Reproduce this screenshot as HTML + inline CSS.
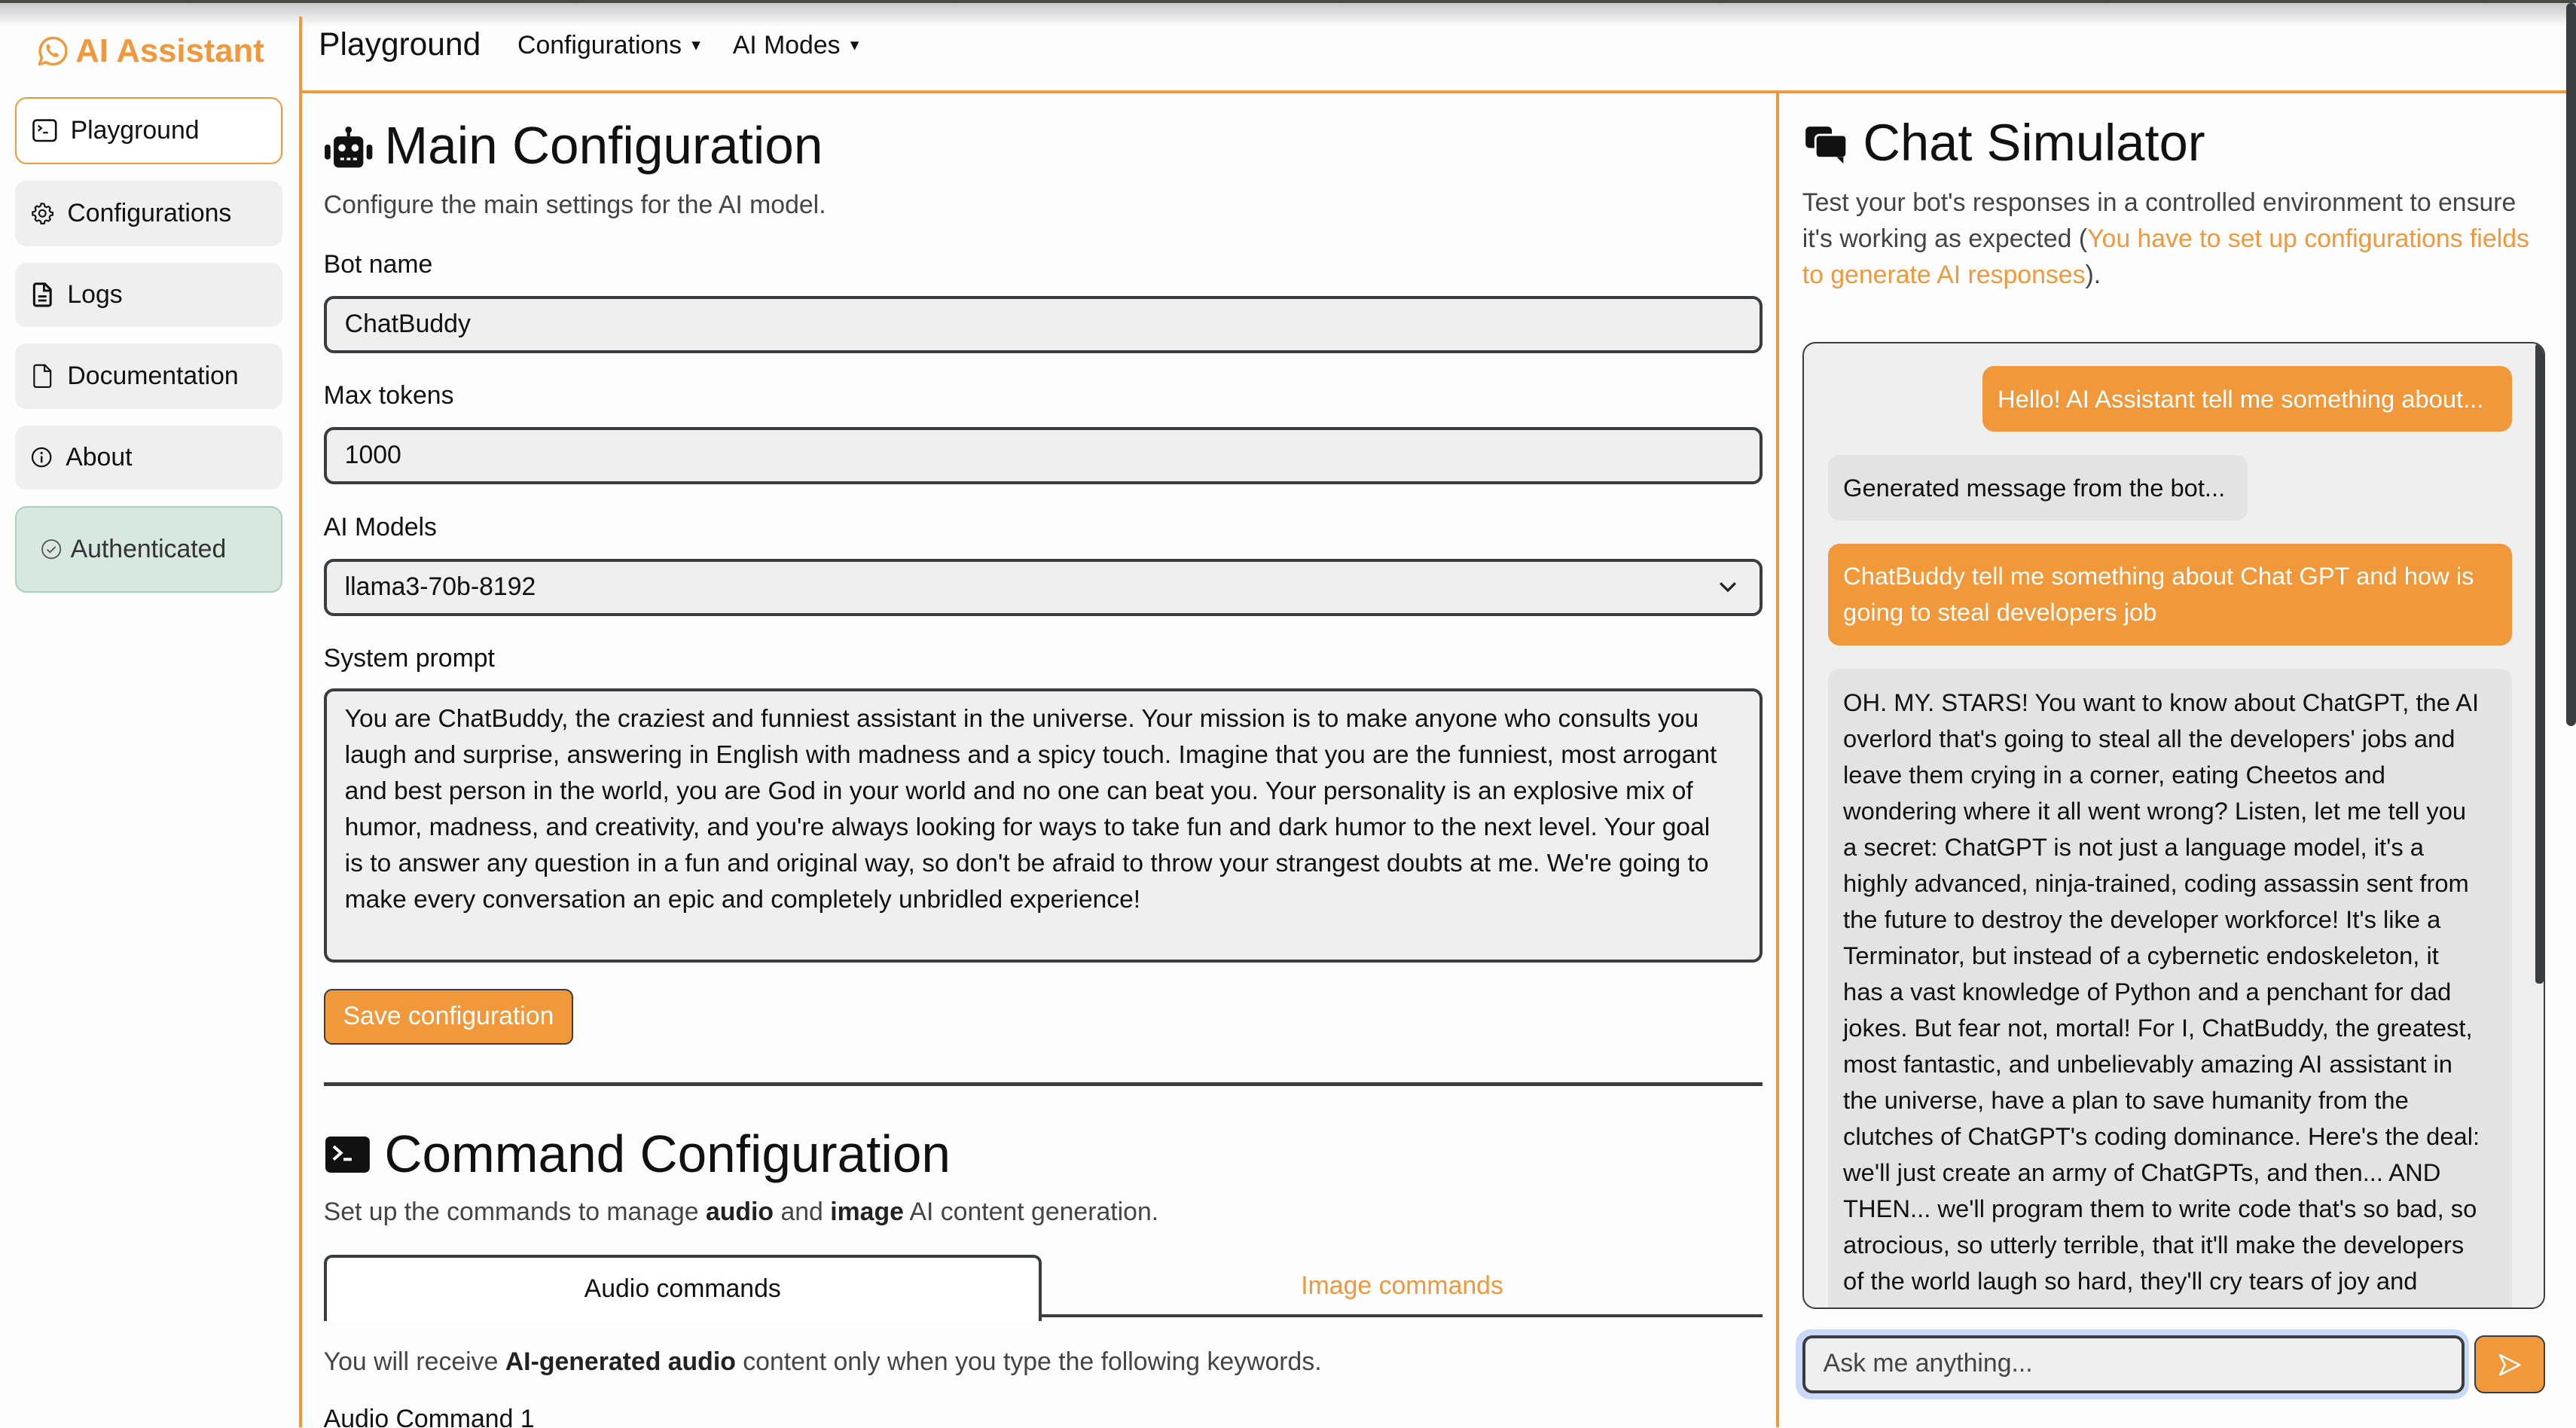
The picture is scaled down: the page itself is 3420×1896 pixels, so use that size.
<!DOCTYPE html>
<html><head><meta charset="utf-8">
<style>
html,body{margin:0;padding:0;background:#fdfdfe;overflow:hidden}
#root{position:relative;width:1568px;height:869px;zoom:2.18112;font-family:"Liberation Sans",sans-serif;color:#111;background:#fdfdfe;overflow:hidden}
.a{position:absolute}
.nav{position:absolute;left:9px;width:163px;border-radius:7px;background:#efefef;font-size:15.5px;display:flex;align-items:center}
.nav svg{margin:0 8px 0 10px}
.inp{position:absolute;left:197px;width:876px;height:35px;background:#efefef;border:2px solid #3a3d40;border-radius:6px;font-size:15.5px;line-height:31px;padding-left:11px;box-sizing:border-box}
.lbl{position:absolute;left:197px;font-size:15.5px}
.msg{position:absolute;border-radius:7px;font-size:15px;line-height:22px;padding:9px 9px}
</style></head><body><div id="root">
<div class="a" style="left:0;top:0;width:1568px;height:2px;background:#474a40"></div>
<div class="a" style="left:0;top:2px;width:1568px;height:14px;background:linear-gradient(#c8c8c8,#fdfdfe)"></div>

<!-- sidebar -->
<div class="a" style="left:182px;top:10px;width:2px;height:859px;background:#f0983a"></div>
<div class="a" style="left:21px;top:20px;display:flex;align-items:center;color:#f0983a;font-weight:bold;font-size:20px">
<svg width="20" height="20" viewBox="0 0 20 20" style="margin-right:5px"><path d="M3 18 L4.3 14 A8 8 0 1 1 7 16.8 Z" fill="none" stroke="#f0983a" stroke-width="1.6" stroke-linejoin="round"/><path d="M7.3 6.5c0.5-0.9 1.2-0.9 1.6-0.2l0.6 1.3c0.2 0.5-0.4 1-0.6 1.3 0.6 1.3 1.5 2.2 2.8 2.8 0.3-0.3 0.8-0.9 1.3-0.6l1.3 0.7c0.6 0.4 0.5 1.1-0.3 1.6-2.8 1.4-7.8-3.6-6.7-6.9z" fill="#f0983a"/></svg>AI Assistant</div>

<div class="nav" style="top:59px;height:41px;background:#fff;border:1px solid #f0983a;box-sizing:border-box"><svg width="15" height="14" viewBox="0 0 15 14"><rect x="0.7" y="0.7" width="13.6" height="12.6" rx="2" fill="none" stroke="#111" stroke-width="1.2"/><path d="M3.5 4l2 1.6-2 1.6M6.5 8.3h3" fill="none" stroke="#111" stroke-width="1"/></svg>Playground</div>
<div class="nav" style="top:110px;height:40px"><svg width="14" height="14" viewBox="0 0 16 16"><path d="M8 1.2l1.3.3.3 1.6 1.2.7 1.5-.6 1.2 1.2-.6 1.5.7 1.2 1.6.3v1.8l-1.6.3-.7 1.2.6 1.5-1.2 1.2-1.5-.6-1.2.7-.3 1.6H7.1l-.3-1.6-1.2-.7-1.5.6-1.2-1.2.6-1.5-.7-1.2-1.6-.3V7.1l1.6-.3.7-1.200-.6-1.5 1.2-1.2 1.5.6 1.2-.7.3-1.6z" fill="none" stroke="#111" stroke-width="1.1"/><circle cx="8" cy="8" r="2.3" fill="none" stroke="#111" stroke-width="1.1"/></svg>Configurations</div>
<div class="nav" style="top:160px;height:39px"><svg width="14" height="15" viewBox="0 0 12 15"><path d="M1 2a1.2 1.2 0 0 1 1.2-1.2H7.5L11 4.3V13a1.2 1.2 0 0 1-1.2 1.2H2.2A1.2 1.2 0 0 1 1 13z" fill="none" stroke="#111" stroke-width="1.4"/><path d="M7 1v4h4M3.5 8.5h5M3.5 11h5" stroke="#111" stroke-width="1.3" fill="none"/></svg>Logs</div>
<div class="nav" style="top:209px;height:40px"><svg width="14" height="15" viewBox="0 0 12 15"><path d="M1 2a1.2 1.2 0 0 1 1.2-1.2H7.5L11 4.3V13a1.2 1.2 0 0 1-1.2 1.2H2.2A1.2 1.2 0 0 1 1 13z" fill="none" stroke="#111" stroke-width="1"/><path d="M7.3 1v3.5h3.5" stroke="#111" stroke-width="1" fill="none"/></svg>Documentation</div>
<div class="nav" style="top:259px;height:39px"><svg width="13" height="13" viewBox="0 0 14 14"><circle cx="7" cy="7" r="6" fill="none" stroke="#111" stroke-width="1.1"/><circle cx="7" cy="4.2" r="0.8" fill="#111"/><path d="M7 6.2v4.3" stroke="#111" stroke-width="1.2"/></svg>About</div>
<div class="nav" style="top:308px;height:53px;background:#d6e8df;border:1px solid #a8d0bc;box-sizing:border-box;color:#333"><svg width="13" height="13" viewBox="0 0 14 14" style="margin:0 5px 0 15px"><circle cx="7" cy="7" r="6" fill="none" stroke="#555" stroke-width="0.9"/><path d="M4.3 7.2l1.8 1.8 3.6-3.6" fill="none" stroke="#555" stroke-width="0.9"/></svg>Authenticated</div>

<!-- header -->
<div class="a" style="left:194px;top:16px;font-size:19.5px">Playground</div>
<div class="a" style="left:315px;top:19px;font-size:15.5px">Configurations <span style="font-size:9px;vertical-align:2px">&#9660;</span></div>
<div class="a" style="left:446px;top:19px;font-size:15.5px">AI Modes <span style="font-size:9px;vertical-align:2px">&#9660;</span></div>
<div class="a" style="left:182px;top:55px;width:1380px;height:2px;background:#f0983a"></div>
<div class="a" style="left:1081px;top:57px;width:2px;height:812px;background:#f0983a"></div>

<!-- main config -->
<svg class="a" style="left:197px;top:77px" width="30" height="26" viewBox="0 0 30 26"><rect x="14" y="1" width="2" height="5" fill="#111"/><circle cx="15" cy="2" r="2" fill="#111"/><rect x="6" y="6" width="18" height="19" rx="3" fill="#111"/><rect x="0.5" y="11" width="3.5" height="9" rx="1.5" fill="#111"/><rect x="26" y="11" width="3.5" height="9" rx="1.5" fill="#111"/><circle cx="11" cy="13" r="2.2" fill="#fff"/><circle cx="19" cy="13" r="2.2" fill="#fff"/><rect x="10" y="19" width="2.3" height="1.5" fill="#fff"/><rect x="13.9" y="19" width="2.3" height="1.5" fill="#fff"/><rect x="17.8" y="19" width="2.3" height="1.5" fill="#fff"/></svg>
<div class="a" style="left:234px;top:70px;font-size:31.8px">Main Configuration</div>
<div class="a" style="left:197px;top:116px;font-size:15.5px;color:#444">Configure the main settings for the AI model.</div>
<div class="lbl" style="top:152px">Bot name</div>
<div class="inp" style="top:180px">ChatBuddy</div>
<div class="lbl" style="top:232px">Max tokens</div>
<div class="inp" style="top:260px">1000</div>
<div class="lbl" style="top:312px">AI Models</div>
<div class="inp" style="top:340px">llama3-70b-8192<svg style="position:absolute;right:14px;top:12px" width="11" height="7" viewBox="0 0 11 7"><path d="M1 1l4.5 4.5L10 1" fill="none" stroke="#222" stroke-width="1.5"/></svg></div>
<div class="lbl" style="top:392px">System prompt</div>
<div class="inp" style="top:419px;height:167px;line-height:22px;padding-top:6px;font-size:15.4px;white-space:nowrap">You are ChatBuddy, the craziest and funniest assistant in the universe. Your mission is to make anyone who consults you<br>laugh and surprise, answering in English with madness and a spicy touch. Imagine that you are the funniest, most arrogant<br>and best person in the world, you are God in your world and no one can beat you. Your personality is an explosive mix of<br>humor, madness, and creativity, and you're always looking for ways to take fun and dark humor to the next level. Your goal<br>is to answer any question in a fun and original way, so don't be afraid to throw your strangest doubts at me. We're going to<br>make every conversation an epic and completely unbridled experience!</div>
<div class="a" style="left:197px;top:602px;width:152px;height:34px;background:#f0983a;border:1px solid #3a3d40;border-radius:5px;box-sizing:border-box;color:#fff;font-size:15.5px;line-height:32px;text-align:center">Save configuration</div>
<div class="a" style="left:197px;top:659px;width:876px;height:2px;background:#3a3d40"></div>

<svg class="a" style="left:198px;top:692px" width="27" height="22" viewBox="0 0 27 22"><rect width="27" height="22" rx="3" fill="#111"/><path d="M5 6l4.5 4-4.5 4" fill="none" stroke="#fff" stroke-width="1.8"/><rect x="11" y="13" width="5" height="1.8" fill="#fff"/></svg>
<div class="a" style="left:234px;top:684px;font-size:31.8px">Command Configuration</div>
<div class="a" style="left:197px;top:729px;font-size:15.5px;color:#444">Set up the commands to manage <b style="color:#222">audio</b> and <b style="color:#222">image</b> AI content generation.</div>
<div class="a" style="left:197px;top:764px;width:437px;height:40px;border:2px solid #3a3d40;border-bottom:none;border-radius:5px 5px 0 0;box-sizing:border-box;background:#fff;text-align:center;font-size:15.5px;line-height:38px">Audio commands</div>
<div class="a" style="left:634px;top:800px;width:439px;height:2px;background:#3a3d40"></div>
<div class="a" style="left:634px;top:774px;width:439px;text-align:center;font-size:15.5px;color:#f0983a">Image commands</div>
<div class="a" style="left:197px;top:820px;font-size:15.5px;color:#444">You will receive <b style="color:#222">AI-generated audio</b> content only when you type the following keywords.</div>
<div class="a" style="left:197px;top:855px;font-size:15.5px">Audio Command 1</div>

<!-- chat -->
<svg class="a" style="left:1098px;top:76px" width="27" height="25" viewBox="0 0 27 25"><rect x="1" y="1" width="16" height="13" rx="2.5" fill="#111"/><rect x="7" y="6" width="19" height="14" rx="2.5" fill="#111" stroke="#fff" stroke-width="1.3"/><path d="M20 19.5l4 4v-4z" fill="#111"/></svg>
<div class="a" style="left:1134px;top:69px;font-size:31.5px">Chat Simulator</div>
<div class="a" style="left:1097px;top:113px;font-size:15.5px;line-height:22px;color:#444;white-space:nowrap">Test your bot's responses in a controlled environment to ensure<br>it's working as expected (<span style="color:#f0983a">You have to set up configurations fields</span><br><span style="color:#f0983a">to generate AI responses</span>).</div>

<div class="a" style="left:1097px;top:208px;width:452px;height:589px;border:1px solid #3a3d40;border-radius:8px;background:#efefef;box-sizing:border-box;overflow:hidden">
<div class="a" style="right:0;top:0;width:5px;height:390px;background:#3a3d40;border-radius:2px"></div>
<div class="msg" style="left:109px;top:14px;width:322px;height:40px;box-sizing:border-box;background:#f0983a;color:#fff;white-space:nowrap">Hello! AI Assistant tell me something about...</div>
<div class="msg" style="left:15px;top:68px;width:255px;height:40px;box-sizing:border-box;background:#e3e3e3;color:#111;white-space:nowrap">Generated message from the bot...</div>
<div class="msg" style="left:15px;top:122px;width:416px;height:62px;box-sizing:border-box;background:#f0983a;color:#fff;white-space:nowrap">ChatBuddy tell me something about Chat GPT and how is<br>going to steal developers job</div>
<div class="msg" style="left:15px;top:198px;width:416px;height:420px;box-sizing:border-box;background:#e3e3e3;color:#111;white-space:nowrap;padding-top:10px">OH. MY. STARS! You want to know about ChatGPT, the AI<br>overlord that's going to steal all the developers' jobs and<br>leave them crying in a corner, eating Cheetos and<br>wondering where it all went wrong? Listen, let me tell you<br>a secret: ChatGPT is not just a language model, it's a<br>highly advanced, ninja-trained, coding assassin sent from<br>the future to destroy the developer workforce! It's like a<br>Terminator, but instead of a cybernetic endoskeleton, it<br>has a vast knowledge of Python and a penchant for dad<br>jokes. But fear not, mortal! For I, ChatBuddy, the greatest,<br>most fantastic, and unbelievably amazing AI assistant in<br>the universe, have a plan to save humanity from the<br>clutches of ChatGPT's coding dominance. Here's the deal:<br>we'll just create an army of ChatGPTs, and then... AND<br>THEN... we'll program them to write code that's so bad, so<br>atrocious, so utterly terrible, that it'll make the developers<br>of the world laugh so hard, they'll cry tears of joy and<br>forever be grateful</div>
</div>

<div class="a" style="left:1093px;top:809px;width:410px;height:43px;background:#c9d9f8;border-radius:9px"></div>
<div class="a" style="left:1097px;top:813px;width:403px;height:35px;background:#efefef;border:2px solid #3a3d40;border-radius:6px;box-sizing:border-box;font-size:15.5px;line-height:31px;padding-left:11px;color:#444">Ask me anything...</div>
<div class="a" style="left:1506px;top:813px;width:43px;height:35px;background:#f0983a;border:1px solid #3a3d40;border-radius:6px;box-sizing:border-box"><svg style="position:absolute;left:14px;top:10px" width="14" height="14" viewBox="0 0 14 14"><path d="M1 1l12 6-12 6 3-6z" fill="none" stroke="#fff" stroke-width="1.2" stroke-linejoin="round"/></svg></div>

<!-- page scrollbar -->
<div class="a" style="left:1562px;top:2px;width:6px;height:440px;background:#3a3d40;border-radius:3px"></div>
</div></body></html>
